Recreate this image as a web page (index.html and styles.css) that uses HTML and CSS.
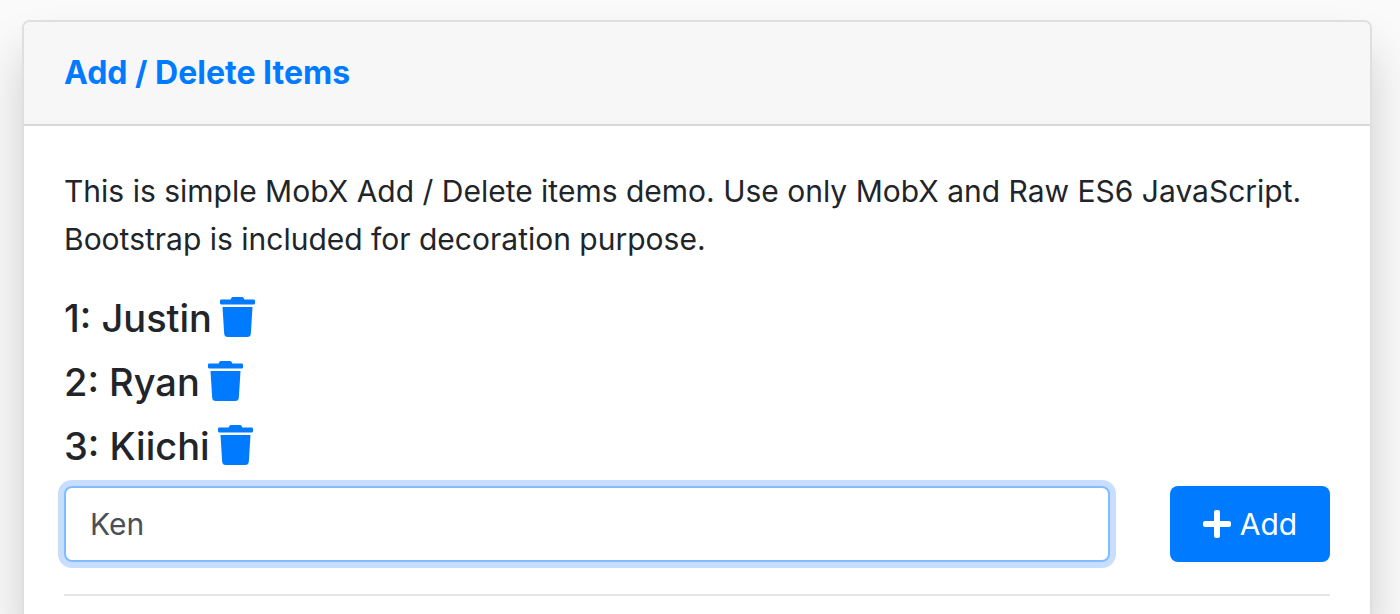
FILE: index.html
```html
<!DOCTYPE html>
<html lang="en">
<head>
<meta charset="utf-8">
<title>Add / Delete Items</title>
<link rel="stylesheet" href="styles.css">
</head>
<body>
<svg class="sprite" aria-hidden="true">
  <symbol id="trash" viewBox="0 0 448 512"><path d="M432 32H312l-9.400-18.700A24 24 0 0 0 281.100 0H166.800a23.720 23.720 0 0 0-21.400 13.300L136 32H16A16 16 0 0 0 0 48v32a16 16 0 0 0 16 16h416a16 16 0 0 0 16-16V48a16 16 0 0 0-16-16zM53.200 467a48 48 0 0 0 47.900 45h245.800a48 48 0 0 0 47.900-45L416 128H32z"/></symbol>
</svg>
<main class="card">
  <header class="card-header"><h1 class="card-title">Add / Delete Items</h1></header>
  <div class="card-body">
    <p class="intro">This is simple MobX Add / Delete items demo. Use only MobX and Raw ES6 JavaScript. Bootstrap is included for decoration purpose.</p>
    <ul class="items">
      <li class="item"><span>1: Justin</span><button class="delete" type="button" aria-label="Delete Justin"><svg class="trash-icon"><use href="#trash"/></svg></button></li>
      <li class="item"><span>2: Ryan</span><button class="delete" type="button" aria-label="Delete Ryan"><svg class="trash-icon"><use href="#trash"/></svg></button></li>
      <li class="item"><span>3: Kiichi</span><button class="delete" type="button" aria-label="Delete Kiichi"><svg class="trash-icon"><use href="#trash"/></svg></button></li>
    </ul>
    <form class="add-form">
      <input class="name-input" type="text" value="Ken" aria-label="Item name">
      <button class="add-button" type="button"><svg class="plus-icon" viewBox="0 0 448 512" aria-hidden="true"><path d="M416 208H272V64c0-17.670-14.330-32-32-32h-32c-17.670 0-32 14.330-32 32v144H32c-17.670 0-32 14.330-32 32v32c0 17.670 14.330 32 32 32h144v144c0 17.670 14.330 32 32 32h32c17.670 0 32-14.330 32-32V304h144c17.670 0 32-14.330 32-32v-32c0-17.670-14.330-32-32-32z"/></svg>Add</button>
    </form>
    <hr class="divider">
  </div>
</main>
</body>
</html>
```
FILE: styles.css
```css
* { box-sizing: border-box; }
body {
  margin: 0;
  padding: 20px 28px 0 22px;
  background: #fafafa;
  color: #212529;
  font: 30px/48px Inter, "Liberation Sans", sans-serif;
}
.sprite { position: absolute; width: 0; height: 0; }
.card {
  background: #fff;
  border: 2px solid #dfdfdf;
  border-bottom: 0;
  border-radius: 8px 8px 0 0;
  box-shadow: 0 32px 48px rgba(0, 0, 0, 0.18);
}
.card-header {
  padding: 26px 40px;
  background: #f7f7f7;
  border-bottom: 2px solid #d8d8d8;
  border-radius: 6px 6px 0 0;
}
.card-title {
  margin: 0;
  color: #007bff;
  font-size: 32px;
  line-height: 50px;
  font-weight: 700;
}
.card-body { padding: 41px 40px 18px; }
.intro { margin: 0 0 31px; }
.items { margin: 0; padding: 0; list-style: none; }
.item {
  display: flex;
  align-items: center;
  gap: 8px;
  height: 48px;
  margin-bottom: 16px;
  font-size: 38px;
  font-weight: 500;
}
.delete {
  display: flex;
  padding: 0 0 2px;
  border: 0;
  background: none;
  color: #007bff;
}
.trash-icon { width: 35px; height: 40px; fill: currentColor; }
.add-form { display: flex; justify-content: space-between; gap: 60px; }
.name-input {
  flex: 1;
  min-width: 0;
  height: 76px;
  padding: 12px 24px;
  border: 2px solid #80bdff;
  border-radius: 8px;
  outline: 0;
  background: #fff;
  box-shadow: 0 0 0 6px #c8deff;
  color: #495057;
  font: inherit;
}
.add-button {
  display: flex;
  align-items: center;
  justify-content: center;
  gap: 9px;
  width: 160px;
  height: 76px;
  padding: 0;
  border: 0;
  border-radius: 8px;
  background: #007bff;
  color: #fff;
  font: inherit;
}
.plus-icon { width: 28px; height: 32px; fill: currentColor; }
.divider { height: 2px; margin: 32px 0 0; border: 0; background: #e5e5e5; }
```
